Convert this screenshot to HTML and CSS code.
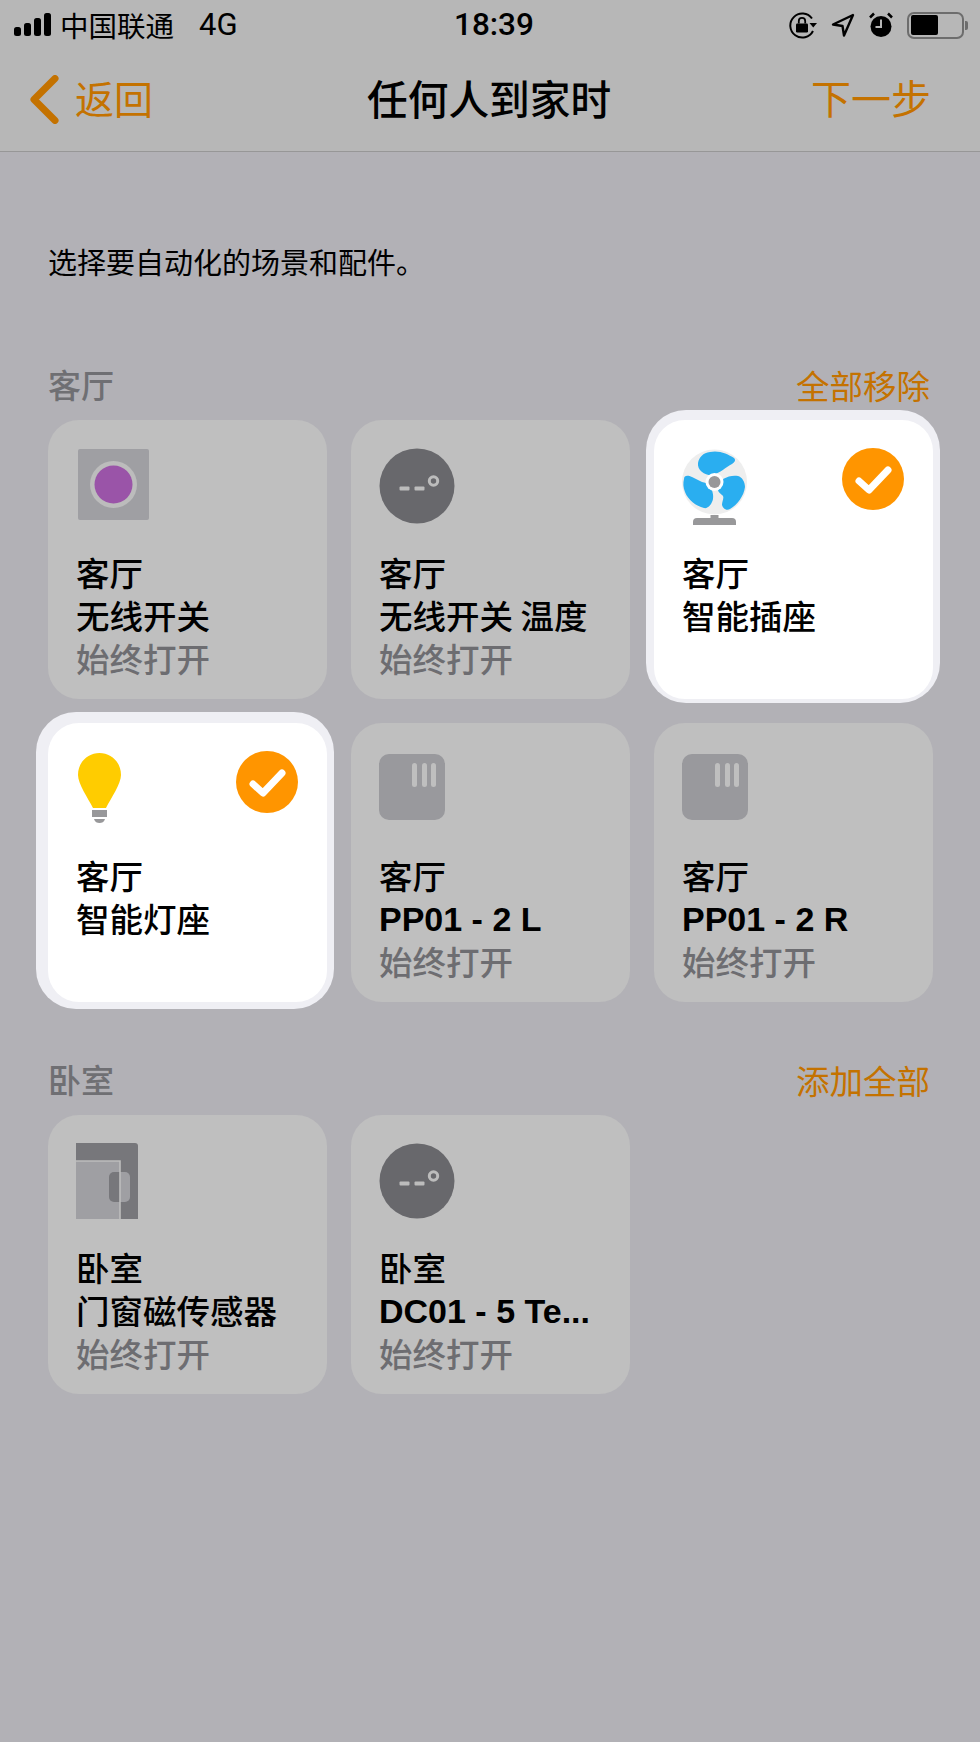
FILE: index.html
```html
<!DOCTYPE html>
<html lang="zh-CN">
<head>
<meta charset="utf-8">
<title>任何人到家时</title>
<link rel="stylesheet" href="styles.css">
</head>
<body>
<header class="top">
  <div class="status">
    <div class="status-left">
      <svg class="signal" width="38" height="24" viewBox="0 0 38 24"><rect x="0" y="14" width="7" height="9" rx="2.5"/><rect x="10" y="10" width="7" height="13" rx="2.5"/><rect x="20" y="5" width="7" height="18" rx="2.5"/><rect x="30" y="0" width="7" height="23" rx="2.5"/></svg>
      <span class="carrier">中国联通</span>
      <span class="net">4G</span>
    </div>
    <div class="time">18:39</div>
    <div class="status-right">
      <svg width="28" height="28" viewBox="0 0 28 28"><path d="M23 7.500A12 12 0 1 0 24 20" fill="none" stroke="#000" stroke-width="2"/><path d="M20.500 12h7.500l-3.750 4.500z"/><rect x="7" y="12.500" width="12" height="9" rx="1.200"/><path d="M9.800 12.500V10a3.200 3.200 0 0 1 6.400 0v2.500" fill="none" stroke="#000" stroke-width="1.800"/></svg>
      <svg width="24" height="24" viewBox="0 0 24 24"><path d="M22 2 2 11.500l9.500 1.500 1.500 9.500z" fill="none" stroke="#000" stroke-width="2.400" stroke-linejoin="round"/></svg>
      <svg width="24" height="26" viewBox="0 0 24 26"><circle cx="12" cy="14.500" r="10.500"/><path d="M12 7.500v7.500H6.500" fill="none" stroke="#b7b7b7" stroke-width="2"/><path d="M1 5.500 5 1.500M23 5.500l-4-4" stroke="#000" stroke-width="2.500"/></svg>
      <div class="battery"><div class="battery-body"><div class="battery-level"></div></div><div class="battery-cap"></div></div>
    </div>
  </div>
  <nav class="nav">
    <div class="back">
      <svg width="30" height="49" viewBox="0 0 30 49"><path d="M26 3.500 5 24.500l21 21" fill="none" stroke="#c47200" stroke-width="7" stroke-linecap="round" stroke-linejoin="round"/></svg>
      <span class="nav-text back-text">返回</span>
    </div>
    <h1 class="title">任何人到家时</h1>
    <div class="nav-text">下一步</div>
  </nav>
</header>

<main class="content">
  <p class="intro">选择要自动化的场景和配件。</p>

  <section class="room room-first">
    <div class="room-head"><h2>客厅</h2><span class="room-action">全部移除</span></div>
    <div class="grid">
      <article class="card">
        <div class="card-top">
          <svg class="icon shift" width="71" height="71" viewBox="0 0 71 71"><rect width="71" height="71" rx="2" fill="#9f9fa3"/><circle cx="35.500" cy="35.500" r="23.500" fill="#bcbcbc"/><circle cx="35.500" cy="35.500" r="19" fill="#9a54a8"/></svg>
        </div>
        <div class="lines"><div>客厅</div><div>无线开关</div><div class="state">始终打开</div></div>
      </article>
      <article class="card">
        <div class="card-top">
          <svg class="icon temp" width="76" height="76" viewBox="0 0 76 76"><circle cx="38" cy="38" r="37.500" fill="#68686c"/><rect x="20.500" y="38.500" width="10" height="4" rx="1" fill="#bcbcbc"/><rect x="35.500" y="38.500" width="10" height="4" rx="1" fill="#bcbcbc"/><circle cx="54.500" cy="33" r="4.200" fill="none" stroke="#bcbcbc" stroke-width="3"/></svg>
        </div>
        <div class="lines"><div>客厅</div><div>无线开关 温度</div><div class="state">始终打开</div></div>
      </article>
      <article class="card on on-a">
        <div class="card-top">
          <svg class="icon" width="66" height="76" viewBox="0 0 66 76"><circle cx="32.500" cy="33" r="32.500" fill="#eeeeee"/><g fill="#2aaef0"><path d="M16 14C17 8 21 4 28 3 37 1 46 5 52 9 54 11 53 13 50 15 44 18 38 24 31 26 24 27 15 22 16 14Z"/><path d="M2 30C2 26 6 26 10 28 16 31 22 35 28 34 29 40 32 44 31 50 30 55 26 60 22 59 14 57 6 51 3 43 1 38 1 34 2 30Z"/><path d="M41 30C46 27 52 26 56 27 60 28 63 33 63 38 62 47 55 56 48 60 45 62 41 60 40 56 40 52 43 48 40 46 38 44 36 43 36 41 39 37 41 34 41 30Z"/></g><circle cx="32.500" cy="33" r="9" fill="#fff"/><circle cx="32.500" cy="33" r="6" fill="#98989a"/><rect x="28.500" y="66" width="8" height="4" fill="#98989a"/><path d="M11 76v-3a4 4 0 0 1 4-4h35a4 4 0 0 1 4 4v3z" fill="#98989a"/></svg>
          <svg class="check" width="62" height="62" viewBox="0 0 62 62"><circle cx="31" cy="31" r="31" fill="#ff9500"/><path d="M17 33l10 9 19-20" fill="none" stroke="#fff" stroke-width="7" stroke-linecap="round" stroke-linejoin="round"/></svg>
        </div>
        <div class="lines"><div>客厅</div><div>智能插座</div></div>
      </article>
      <article class="card on on-b">
        <div class="card-top">
          <svg class="icon shift bulb" width="43" height="70" viewBox="0 0 43 70"><path d="M21.500 0C33 0 43 9 43 22 43 31 33 45 28 55H15C10 45 0 31 0 22 0 9 10 0 21.500 0Z" fill="#ffcc00"/><rect x="14" y="57" width="15" height="7" fill="#98989a"/><path d="M16 66h11c-1 3-3 4-5.500 4S17 69 16 66z" fill="#98989a"/></svg>
          <svg class="check" width="62" height="62" viewBox="0 0 62 62"><circle cx="31" cy="31" r="31" fill="#ff9500"/><path d="M17 33l10 9 19-20" fill="none" stroke="#fff" stroke-width="7" stroke-linecap="round" stroke-linejoin="round"/></svg>
        </div>
        <div class="lines"><div>客厅</div><div>智能灯座</div></div>
      </article>
      <article class="card">
        <div class="card-top"><div class="plug"><i></i><i></i><i></i></div></div>
        <div class="lines"><div>客厅</div><div class="latin">PP01 - 2 L</div><div class="state">始终打开</div></div>
      </article>
      <article class="card">
        <div class="card-top"><div class="plug"><i></i><i></i><i></i></div></div>
        <div class="lines"><div>客厅</div><div class="latin">PP01 - 2 R</div><div class="state">始终打开</div></div>
      </article>
    </div>
  </section>

  <section class="room">
    <div class="room-head"><h2>卧室</h2><span class="room-action">添加全部</span></div>
    <div class="grid">
      <article class="card">
        <div class="card-top">
          <svg class="icon door" width="62" height="76" viewBox="0 0 62 76"><path d="M0 0h59a3 3 0 0 1 3 3v73H0z" fill="#77777b"/><rect x="0" y="18" width="44" height="58" fill="#9f9fa3"/><rect x="33" y="29" width="21" height="30" rx="5" fill="#77777b"/><path d="M44 29h5a5 5 0 0 1 5 5v20a5 5 0 0 1-5 5h-5z" fill="#9f9fa3"/><path d="M0 18h44v58" fill="none" stroke="#bdbdbd" stroke-width="1.600"/></svg>
        </div>
        <div class="lines"><div>卧室</div><div>门窗磁传感器</div><div class="state">始终打开</div></div>
      </article>
      <article class="card">
        <div class="card-top"><svg class="icon temp" width="76" height="76" viewBox="0 0 76 76"><circle cx="38" cy="38" r="37.500" fill="#68686c"/><rect x="20.500" y="38.500" width="10" height="4" rx="1" fill="#bcbcbc"/><rect x="35.500" y="38.500" width="10" height="4" rx="1" fill="#bcbcbc"/><circle cx="54.500" cy="33" r="4.200" fill="none" stroke="#bcbcbc" stroke-width="3"/></svg></div>
        <div class="lines"><div>卧室</div><div class="latin">DC01 - 5 Te...</div><div class="state">始终打开</div></div>
      </article>
    </div>
  </section>
</main>
</body>
</html>
```

FILE: styles.css
```css
* { box-sizing: border-box; }
html, body { margin: 0; padding: 0; }
body {
  width: 980px;
  min-height: 1742px;
  background: #b2b1b6;
  color: #000;
  font-family: "Noto Sans CJK SC", "Noto Sans", sans-serif;
}
.top {
  height: 152px;
  background: #b7b7b7;
  border-bottom: 1px solid #979797;
}
.status {
  height: 50px;
  display: flex;
  align-items: center;
  justify-content: space-between;
  padding: 0 12px 0 14px;
  position: relative;
}
.status-left { display: flex; align-items: center; }
.signal { margin-right: 8px; }
.carrier { font-size: 28.500px; line-height: 40px; }
.net { font-family: "Roboto", "Liberation Sans", sans-serif; font-size: 31px; line-height: 40px; margin-left: 25px; }
.time {
  position: absolute;
  left: 454px;
  top: 5px;
  font-family: "Roboto", "Liberation Sans", sans-serif;
  font-size: 31.500px;
  line-height: 40px;
  font-weight: 500;
}
.status-right { display: flex; align-items: center; gap: 14px; }
.battery { display: flex; align-items: center; }
.battery-body {
  width: 57px;
  height: 27px;
  border: 2.500px solid #6d6d6d;
  border-radius: 7px;
  padding: 1.500px;
}
.battery-level { width: 27px; height: 100%; background: #000; border-radius: 2px; }
.battery-cap { width: 3px; height: 9px; background: #6d6d6d; border-radius: 0 2px 2px 0; margin-left: 1px; }
.nav {
  height: 101px;
  display: flex;
  align-items: center;
  justify-content: space-between;
  padding: 0 49px 2px 29px;
  position: relative;
}
.back { display: flex; align-items: center; gap: 16px; }
.nav-text { color: #c47200; font-size: 40px; padding-bottom: 6px; }
.back-text { font-size: 39px; }
.title {
  position: absolute;
  left: 367px;
  top: 0;
  margin: 0;
  font-size: 40.700px;
  line-height: 95px;
  font-weight: 500;
}
.content { padding: 0 47px 0 48px; }
.intro { margin: 0; padding-top: 87px; font-size: 29px; line-height: 44px; }
.room-first { margin-top: 77px; }
.room { margin-bottom: 53px; }
.room-head {
  display: flex;
  justify-content: space-between;
  align-items: center;
  height: 48px;
  margin-bottom: 12px;
  padding-right: 3px;
}
.room-head h2 { margin: 0; font-size: 33px; font-weight: 500; color: #6f6f73; }
.room-action { font-size: 33.500px; color: #c47200; }
.grid {
  display: grid;
  grid-template-columns: repeat(3, 279px);
  grid-auto-rows: 279px;
  gap: 24px 24px;
}
.card {
  position: relative;
  background: #bfbfbf;
  border-radius: 31px;
  padding: 29px 29px 0 28px;
}
.card-top {
  height: 101px;
  display: flex;
  justify-content: space-between;
  align-items: flex-start;
}
.lines { font-size: 33.500px; line-height: 43px; font-weight: 500; }
.latin {
  font-family: "Liberation Sans", Arial, sans-serif;
  font-weight: 700;
  font-size: 34px;
  line-height: 47px;
  margin-bottom: -4px;
}
.state { color: #6d6d71; }
.on { background: #fff; z-index: 1; }
.on::before {
  content: "";
  position: absolute;
  z-index: -2;
  background: #efeff4;
  border-radius: 40px;
}
.on::after {
  content: "";
  position: absolute;
  inset: 0;
  z-index: -1;
  background: #fff;
  border-radius: 31px;
}
.on-a::before { top: -10px; right: -7px; bottom: -4px; left: -8px; }
.on-b::before { top: -11px; right: -7px; bottom: -7px; left: -12px; }
.icon { display: block; }
.shift { margin-left: 2px; }
.bulb { margin-top: 1px; }
.temp { margin-top: -1px; }
.door { margin-top: -1px; }
.check { display: block; margin-top: -1px; }
.plug {
  width: 66px;
  height: 66px;
  margin-top: 2px;
  border-radius: 10px;
  background: #99999d;
  display: flex;
  justify-content: flex-end;
  gap: 4.500px;
  padding: 9px 9px 0 0;
}
.plug i { display: block; width: 5px; height: 24px; border-radius: 2.500px; background: #bfbfbf; }
```
